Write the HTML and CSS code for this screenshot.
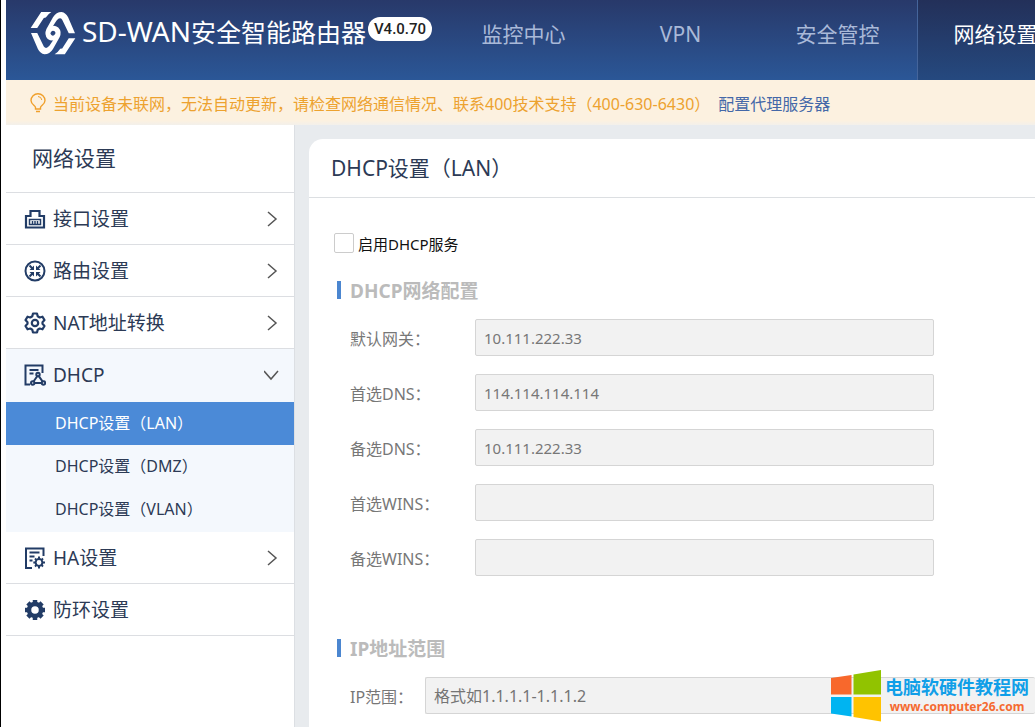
FILE: index.html
```html
<!DOCTYPE html>
<html lang="zh-CN">
<head>
<meta charset="utf-8">
<title>SD-WAN安全智能路由器</title>
<link rel="stylesheet" href="styles.css">
</head>
<body>
<div class="app">
  <header class="topbar">
    <div class="brand">
      <svg class="logo" viewBox="88 30 140 134">
        <g id="knot-half">
          <path fill="#fff" d="M122 33H153Q143 39 136 50L130 51L110 82H90z"/>
          <path fill="#fff" d="M91 97H110L130 138Q137 148 147 136L163 112Q170 100 163 92Q157 87 152 94L146 103Q138 90 148 80Q160 70 174 80Q186 92 178 110L158 146Q148 162 132 162Q119 160 112 146z"/>
        </g>
        <use href="#knot-half" transform="rotate(180 158 97.5)"/>
      </svg>
      <h1 class="product"><span class="product-latin">SD-WAN</span>安全智能路由器</h1>
      <span class="version">V4.0.70</span>
    </div>
    <nav class="nav">
      <a class="nav-item" href="#">监控中心</a>
      <a class="nav-item" href="#">VPN</a>
      <a class="nav-item" href="#">安全管控</a>
      <a class="nav-item active" href="#">网络设置</a>
    </nav>
  </header>

  <div class="notice">
    <svg class="bulb" viewBox="0 0 16 20" fill="none" stroke="#f0a02c" stroke-width="1.4">
      <path d="M5.500 14.500C5.500 12.500 1 11.500 1 7.500a7 6.800 0 0 1 14 0C15 11.500 10.500 12.500 10.500 14.500V16H5.500zM6 18.500h4"/>
      <path d="M8 3.500a4 4 0 0 1 3.800 3.500" stroke-width="1"/>
    </svg>
    <span>当前设备未联网，无法自动更新，请检查网络通信情况、联系400技术支持（400-630-6430）</span>
    <a class="notice-link" href="#">配置代理服务器</a>
  </div>

  <div class="body">
    <aside class="sidebar">
      <h2 class="side-title">网络设置</h2>
      <a class="side-item" href="#">
        <svg class="icon" viewBox="0 0 22 22" fill="none" stroke="#223c66" stroke-width="2.200">
          <path d="M2 8h4.500V3h9v5H20v11.500H2z"/><path d="M5.500 16.500v-5h11v5z" stroke-width="1.500"/><path d="M8.500 13v3M11 13v3M13.500 13v3" stroke-width="1.500"/>
        </svg>
        <span>接口设置</span>
        <svg class="arrow" viewBox="0 0 16 16"><path d="M4 1l8 7-8 7"/></svg>
      </a>
      <a class="side-item" href="#">
        <svg class="icon" viewBox="0 0 22 22" fill="none" stroke="#223c66" stroke-width="2">
          <circle cx="11" cy="11" r="9.500"/>
          <path d="M5.500 5.500l3.500 3.500M16.500 5.500l-3.500 3.500M5.500 16.500l3.500-3.500M16.500 16.500l-3.500-3.500" stroke-width="2"/>
          <path fill="#223c66" stroke="none" d="M10 10V5.500L5.500 10zM12 10V5.500L16.500 10zM10 12v4.500L5.500 12zM12 12v4.500l4.500-4.500z"/>
        </svg>
        <span>路由设置</span>
        <svg class="arrow" viewBox="0 0 16 16"><path d="M4 1l8 7-8 7"/></svg>
      </a>
      <a class="side-item" href="#">
        <svg class="icon" viewBox="0 0 22 22" fill="none" stroke="#223c66" stroke-width="2.200" stroke-linejoin="round">
          <path d="M9 1.500h4l.7 2.800 2 1.200 2.800-.8 2 3.400-2 2.100v1.600l2 2.100-2 3.400-2.800-.8-2 1.200-.7 2.800H9l-.7-2.800-2-1.200-2.800.8-2-3.400 2-2.100v-1.600l-2-2.100 2-3.400 2.800.8 2-1.200z"/>
          <circle cx="11" cy="11" r="3.200"/>
        </svg>
        <span>NAT地址转换</span>
        <svg class="arrow" viewBox="0 0 16 16"><path d="M4 1l8 7-8 7"/></svg>
      </a>
      <div class="side-group">
        <a class="side-item open" href="#">
          <svg class="icon" viewBox="0 0 22 22" fill="none" stroke="#223c66" stroke-width="2">
            <path d="M6 20.500H1.500v-19h17V9M5.500 6h9M5.500 9.500h4"/>
            <circle cx="14" cy="10.500" r="1.700"/><circle cx="8.700" cy="19" r="1.700"/><circle cx="19.500" cy="19" r="1.700"/>
            <path d="M13.200 12.200L9.700 17.300M14.800 12.200l3.700 5.100M10.500 19h7.200" />
          </svg>
          <span>DHCP</span>
          <svg class="arrow" viewBox="0 0 16 16"><path d="M0 4l7 8 7-8"/></svg>
        </a>
        <div class="submenu">
          <a class="sub-item current" href="#">DHCP设置（LAN）</a>
          <a class="sub-item" href="#">DHCP设置（DMZ）</a>
          <a class="sub-item" href="#">DHCP设置（VLAN）</a>
        </div>
      </div>
      <a class="side-item" href="#">
        <svg class="icon" viewBox="0 0 22 22" fill="none" stroke="#223c66" stroke-width="2">
          <path d="M8 21H2V1.500h17.500V9M5.500 5.500h10M5.500 9.500h5M5.500 13.500h3"/>
          <circle cx="15" cy="15.500" r="3.400"/>
          <path d="M15 9.500v2.500M15 19v2.500M9.300 15.500h2.500M18.300 15.500h2.700M11 11.500l1.600 1.600M17.400 17.900l1.600 1.600M19 11.500l-1.600 1.600M12.600 17.900L11 19.500"/>
        </svg>
        <span>HA设置</span>
        <svg class="arrow" viewBox="0 0 16 16"><path d="M4 1l8 7-8 7"/></svg>
      </a>
      <a class="side-item" href="#">
        <svg class="icon" viewBox="0 0 22 22" fill="none" stroke="#223c66">
          <circle cx="11" cy="11" r="6" stroke-width="4.500"/>
          <path d="M11 1v4M11 17v4M1 11h4M17 11h4M3.900 3.900l3 3M15.100 15.100l3 3M18.100 3.900l-3 3M6.900 15.100l-3 3" stroke-width="4.500"/>
        </svg>
        <span>防环设置</span>
      </a>
    </aside>

    <main class="content">
      <section class="card">
        <h2 class="card-title">DHCP设置（LAN）</h2>
        <form class="form">
          <label class="enable"><input class="check" type="checkbox"><span>启用DHCP服务</span></label>

          <h3 class="section">DHCP网络配置</h3>
          <div class="row"><label for="gateway">默认网关：</label><input class="field" id="gateway" type="text" value="10.111.222.33"></div>
          <div class="row"><label for="dns1">首选DNS：</label><input class="field" id="dns1" type="text" value="114.114.114.114"></div>
          <div class="row"><label for="dns2">备选DNS：</label><input class="field" id="dns2" type="text" value="10.111.222.33"></div>
          <div class="row"><label for="wins1">首选WINS：</label><input class="field" id="wins1" type="text"></div>
          <div class="row"><label for="wins2">备选WINS：</label><input class="field" id="wins2" type="text"></div>

          <h3 class="section range-section">IP地址范围</h3>
          <div class="row range"><label for="range">IP范围：</label><input class="field" id="range" type="text" placeholder="格式如1.1.1.1-1.1.1.2"></div>
        </form>
      </section>
    </main>
  </div>

  <div class="watermark">
    <svg class="flag" viewBox="0 0 50 52">
      <path fill="#f8682c" d="M0 8l20.500-3v19.500H0z"/>
      <path fill="#91c300" d="M22.500 4.500L50 0v24.500H22.500z"/>
      <path fill="#00b4f1" d="M0 27h20.500v19.500L0 43.500z"/>
      <path fill="#ffc300" d="M22.500 27H50v24.500l-27.500-4.500z"/>
    </svg>
    <div class="mark-text">
      <strong class="mark-name">电脑软硬件教程网</strong>
      <strong class="mark-url">www.computer26.com</strong>
    </div>
  </div>
</div>
</body>
</html>
```

FILE: styles.css
```css
* { box-sizing: border-box; }

body {
  margin: 0;
  font-family: "Noto Sans", "Noto Sans CJK SC", sans-serif;
  color: #2c3a55;
  background: #fff;
}

a { color: inherit; text-decoration: none; }
h1, h2, h3 { margin: 0; font-weight: 400; }

.app {
  position: relative;
  display: flex;
  flex-direction: column;
  min-height: 100vh;
  padding-left: 5px;
  border-left: 1px solid #000;
  overflow: hidden;
}

.topbar {
  display: flex;
  height: 80px;
  background: linear-gradient(#28396a, #2b5797);
}

.brand {
  display: flex;
  flex: none;
  align-items: flex-start;
  width: 439px;
  padding: 11px 0 0 24px;
}

.logo { width: 46px; height: 44px; }

.product {
  margin-left: 6px;
  font-size: 25px;
  line-height: 40px;
  white-space: nowrap;
  color: #fff;
}

.product-latin { font-size: 28px; }

.version {
  margin: 6px 0 0 2px;
  padding: 0 6px;
  border-radius: 12px;
  background: #fff;
  color: #222;
  font: 500 15px/24px Roboto, sans-serif;
}

.nav { display: flex; flex: 1; min-width: 0; }

.nav-item {
  flex: none;
  width: 157px;
  font-size: 21px;
  line-height: 69px;
  text-align: center;
  white-space: nowrap;
  color: #a9b9d8;
}

.nav-item.active {
  width: 156px;
  margin-left: 1px;
  background: linear-gradient(#233059, #25497f);
  border-left: 1px solid #45659b;
  color: #fff;
}

.notice {
  display: flex;
  align-items: center;
  height: 45px;
  padding: 0 24px;
  font-size: 16px;
  white-space: nowrap;
  color: #eda22f;
  background: linear-gradient(#fcf1e0 90%, #f3f0eb);
}

.bulb { width: 16px; height: 20px; margin-right: 7px; }
.notice-link { margin-left: 8px; color: #4468a8; }

.body { display: flex; flex: 1; }

.sidebar {
  flex: none;
  width: 288px;
  background: #fff;
}

.side-title {
  height: 68px;
  padding-left: 26px;
  border-bottom: 1px solid #dcdee2;
  font-size: 21px;
  line-height: 66px;
}

.side-item {
  display: flex;
  align-items: center;
  height: 52px;
  padding: 0 14px 0 18px;
  border-bottom: 1px solid #dcdee2;
  font-size: 19px;
  line-height: 24px;
}

.side-item.open { border-bottom: 0; }
.icon { width: 22px; height: 22px; margin-right: 7px; }

.arrow {
  width: 16px;
  height: 16px;
  margin-left: auto;
  fill: none;
  stroke: #555;
  stroke-width: 1.5;
}

.side-group { background: #f4f8fd; }
.submenu { padding: 1px 0; }

.sub-item {
  display: block;
  padding-left: 49px;
  font-size: 16px;
  line-height: 43px;
}

.sub-item.current { background: #4b8ad7; color: #fff; }

.content {
  flex: 1;
  min-width: 0;
  padding: 14px 0 0 14px;
  border-left: 1px solid #dcdfe3;
  background: #e8ebee;
}

.card {
  height: 100%;
  border-top-left-radius: 14px;
  background: #fff;
}

.card-title {
  height: 59px;
  padding-left: 22px;
  border-bottom: 1px solid #dcdfe2;
  font-size: 21px;
  line-height: 58px;
}

.form { padding: 34px 0 12px 25px; }

.enable {
  display: flex;
  align-items: center;
  gap: 4px;
  height: 22px;
  font-size: 15px;
  color: #111;
}

.check {
  appearance: none;
  width: 20px;
  height: 20px;
  margin: 0;
  border: 1px solid #ccc;
  border-radius: 2px;
  background: #fff;
}

.section {
  display: flex;
  align-items: center;
  gap: 9px;
  height: 24px;
  margin: 24px 0 17px 3px;
  font-size: 19px;
  font-weight: 700;
  color: #bbb;
}

.section::before {
  content: "";
  width: 4px;
  height: 18px;
  background: #4b86d0;
}

.row {
  display: grid;
  grid-template-columns: 125px minmax(0, 459px);
  align-items: center;
  margin: 0 0 18px 16px;
  font-size: 16px;
  color: #777;
}

.range {
  grid-template-columns: 75px 1fr;
  margin-bottom: 0;
}

.range-section { margin: 60px 0 17px 3px; }

.field {
  width: 100%;
  height: 37px;
  padding: 0 8px;
  border: 1px solid #d5d5d5;
  border-radius: 2px;
  background: #f2f2f2;
  font: inherit;
  font-size: 15px;
  color: #777;
}

.range .field { border-right: 0; font-size: 16px; }
.field::placeholder { color: #757575; opacity: 1; }

.watermark {
  position: absolute;
  right: 6px;
  bottom: 5px;
  display: flex;
  gap: 4px;
}

.flag { width: 50px; height: 52px; }

.mark-text {
  display: flex;
  flex-direction: column;
  align-items: center;
  padding-top: 6px;
}

.mark-name { font-size: 18px; line-height: 22px; color: #109fe8; }
.mark-url { font-size: 12px; line-height: 18px; color: #f56a30; }
```
